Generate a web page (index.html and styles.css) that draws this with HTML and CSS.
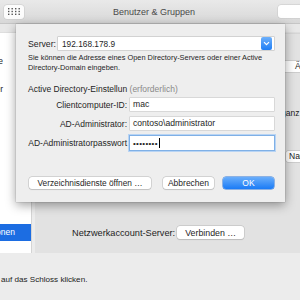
FILE: index.html
```html
<!DOCTYPE html>
<html lang="de">
<head>
<meta charset="utf-8">
<title>Benutzer &amp; Gruppen</title>
<link rel="stylesheet" href="styles.css">
</head>
<body>
<div class="window">
  <div class="titlebar">
    <div class="gridbtn">
      <svg width="12" height="7" viewBox="0 0 12 7">
        <g fill="#555">
          <rect x="0" y="0" width="1.4" height="1.4"/><rect x="3.5" y="0" width="1.4" height="1.4"/><rect x="7" y="0" width="1.4" height="1.4"/><rect x="10.5" y="0" width="1.4" height="1.4"/>
          <rect x="0" y="2.8" width="1.4" height="1.4"/><rect x="3.5" y="2.8" width="1.4" height="1.4"/><rect x="7" y="2.8" width="1.4" height="1.4"/><rect x="10.5" y="2.8" width="1.4" height="1.4"/>
          <rect x="0" y="5.6" width="1.4" height="1.4"/><rect x="3.5" y="5.6" width="1.4" height="1.4"/><rect x="7" y="5.6" width="1.4" height="1.4"/><rect x="10.5" y="5.6" width="1.4" height="1.4"/>
        </g>
      </svg>
    </div>
    <div class="title">Benutzer &amp; Gruppen</div>
    <div class="search"></div>
  </div>
  <div class="strip"></div>
  <div class="main">
    <div class="sidebar">
      <div class="side-item frag1">Gruppe</div>
      <div class="side-item frag2">Gastbenutzer</div>
      <div class="side-spacer"></div>
      <div class="side-item selected">Anmeldeoptionen</div>
    </div>
    <div class="panel">
      <div class="p-btn p-btn1">Ändern</div>
      <div class="p-text">ganz</div>
      <div class="p-btn p-btn2">Namen</div>
      <div class="p-spacer"></div>
      <div class="netrow">
        <span class="netlabel">Netzwerkaccount-Server:</span>
        <span class="btn verbinden">Verbinden …</span>
      </div>
    </div>
  </div>
  <div class="lockline">auf das Schloss klicken.</div>

  <div class="sheet">
    <div class="server-row">
      <span class="label">Server:</span>
      <div class="combo">
        <span class="combo-text">192.168.178.9</span>
        <span class="combo-btn">
          <svg width="7" height="5" viewBox="0 0 7 5"><path d="M1 1.2 L3.5 3.7 L6 1.2" fill="none" stroke="#fff" stroke-width="1.2"/></svg>
        </span>
      </div>
    </div>
    <p class="desc">Sie können die Adresse eines Open Directory-Servers oder einer Active Directory-Domain eingeben.</p>
    <div class="heading">Active Directory-Einstellun <span class="req">(erforderlich)</span></div>
    <div class="form">
      <label class="flabel">Clientcomputer-ID:</label>
      <div class="field">mac</div>
      <label class="flabel">AD-Administrator:</label>
      <div class="field">contoso\administrator</div>
      <label class="flabel">AD-Administratorpasswort</label>
      <div class="field focus"><span class="dots">••••••••</span><span class="caret"></span></div>
    </div>
    <div class="buttons">
      <span class="btn b-verz">Verzeichnisdienste öffnen …</span>
      <span class="btn b-abbr">Abbrechen</span>
      <span class="btn b-ok">OK</span>
    </div>
  </div>
</div>
</body>
</html>
```

FILE: styles.css
```css
html, body {
  margin: 0;
  padding: 0;
}
body {
  width: 300px;
  height: 300px;
  overflow: hidden;
  background: #ececec;
  font-family: "Liberation Sans", Arial, sans-serif;
  color: #222;
}
.window {
  position: relative;
  width: 300px;
  height: 300px;
  overflow: hidden;
}
.titlebar {
  height: 24px;
  box-sizing: border-box;
  display: flex;
  align-items: center;
  background: linear-gradient(#e9e9e9, #d8d8d8);
  border-bottom: 1px solid #c6c6c6;
}
.gridbtn {
  margin-left: 4px;
  width: 20px;
  height: 14px;
  background: #fcfcfc;
  border-radius: 3px;
  box-shadow: 0 0 0 0.5px #c8c8c8;
  display: flex;
  align-items: center;
  justify-content: center;
}
.title {
  margin-left: 89px;
  font-size: 9px;
  color: #4a4a4a;
  white-space: nowrap;
}
.search {
  margin-left: auto;
  margin-right: -10px;
  width: 32px;
  height: 13px;
  background: #fff;
  border-radius: 3px;
  box-shadow: 0 0 0 0.5px #c8c8c8;
}
.strip {
  height: 9px;
  background: #e8e8e8;
  border-bottom: 1px solid #dedede;
  box-sizing: border-box;
}
.main {
  display: flex;
  height: 220px;
}
.sidebar {
  width: 31px;
  background: #fff;
  border-right: 1px solid #d4d4d4;
  display: flex;
  flex-direction: column;
  overflow: hidden;
  font-size: 8.5px;
}
.side-item {
  display: flex;
  justify-content: flex-end;
  white-space: nowrap;
  overflow: hidden;
  height: 13px;
  line-height: 13px;
}
.frag1 {
  margin-top: 22px;
  padding-right: 28px;
}
.frag2 {
  margin-top: 15px;
  padding-right: 28px;
}
.side-spacer {
  flex: 1;
}
.selected {
  height: 17px;
  line-height: 17px;
  background: #1c6de2;
  color: #fff;
  padding-right: 16px;
  margin-bottom: 12px;
}
.panel {
  margin-left: 3px;
  flex: 1;
  background: #e2e2e2;
  border-top: 1px solid #d6d6d6;
  display: flex;
  flex-direction: column;
  font-size: 8.5px;
  overflow: hidden;
}
.p-btn {
  background: #fff;
  border-radius: 2px;
  box-shadow: 0 0 0 0.5px #b8b8b8;
  height: 11px;
  line-height: 11px;
  padding-left: 10px;
  white-space: nowrap;
  width: 40px;
}
.p-btn1 {
  margin-top: 27px;
  margin-left: 248px;
  padding-left: 12px;
}
.p-text {
  margin-top: 36px;
  margin-left: 246px;
  white-space: nowrap;
}
.p-btn2 {
  margin-top: 33px;
  margin-left: 251px;
  padding-left: 3px;
}
.p-spacer {
  flex: 1;
}
.netrow {
  display: flex;
  align-items: center;
  margin-left: 37px;
  margin-bottom: 14px;
  white-space: nowrap;
}
.netlabel {
  font-size: 9.2px;
  color: #1e1e1e;
}
.btn {
  display: inline-flex;
  align-items: center;
  justify-content: center;
  background: #fff;
  border-radius: 3px;
  box-shadow: 0 0 0 0.5px #b9b9b9, 0 0.5px 1px rgba(0,0,0,0.15);
  font-size: 8.5px;
  height: 12px;
  white-space: nowrap;
  color: #1e1e1e;
}
.verbinden {
  margin-left: 2px;
  width: 67px;
  height: 13px;
  font-size: 8.8px;
}
.lockline {
  margin-top: 22px;
  padding-left: 1px;
  font-size: 8.1px;
  color: #222;
  white-space: nowrap;
}

/* Sheet (overlay dialog) */
.sheet {
  position: absolute;
  left: 16px;
  top: 24px;
  width: 269px;
  height: 178px;
  box-sizing: border-box;
  background: #eeeeee;
  box-shadow: 0 3px 10px rgba(0,0,0,0.38), 0 0 1px rgba(0,0,0,0.4);
  padding: 13px 11px 0 12px;
  font-size: 8.5px;
  color: #1e1e1e;
}
.server-row {
  display: flex;
  align-items: center;
  height: 13px;
}
.label {
  font-size: 8.7px;
  width: 30px;
}
.combo {
  flex: 1;
  height: 13px;
  display: flex;
  align-items: center;
  background: #fff;
  box-shadow: 0 0 0 0.5px #b5b5b5;
}
.combo-text {
  flex: 1;
  padding-left: 4px;
  font-size: 8.3px;
}
.combo-btn {
  width: 11px;
  height: 13px;
  margin-right: 2px;
  border-radius: 2px;
  background: linear-gradient(#6db0fb, #1f7ef5);
  display: flex;
  align-items: center;
  justify-content: center;
}
.desc {
  margin: 3px 0 0 0;
  font-size: 7.4px;
  line-height: 10px;
  width: 250px;
}
.heading {
  margin-top: 10px;
  height: 12px;
  line-height: 12px;
  font-size: 8.5px;
  white-space: nowrap;
}
.req {
  color: #8a8a8a;
}
.form {
  margin-top: 3px;
  display: grid;
  grid-template-columns: 99px 1fr;
  column-gap: 3px;
  row-gap: 6px;
  align-items: center;
}
.flabel {
  text-align: right;
  font-size: 8.5px;
  white-space: nowrap;
}
.field {
  height: 13px;
  line-height: 13px;
  background: #fff;
  box-shadow: 0 0 0 0.5px #c2c2c2;
  padding-left: 3px;
  font-size: 8.6px;
  display: flex;
  align-items: center;
}
.field.focus {
  height: 14px;
  box-shadow: 0 0 0 1px #7fb0e6, 0 0 0 2px #b8d4f4;
}
.dots {
  font-size: 8px;
  letter-spacing: 0.3px;
}
.caret {
  width: 1px;
  height: 10px;
  background: #000;
  margin-left: 1px;
}
.buttons {
  margin-top: 26px;
  display: flex;
  align-items: center;
  height: 13px;
}
.buttons .btn {
  height: 12px;
}
.b-verz {
  margin-left: 1px;
  width: 122px;
  font-size: 8.3px;
}
.b-abbr {
  margin-left: 12px;
  width: 51px;
}
.b-ok {
  margin-left: 9px;
  width: 51px;
  background: linear-gradient(#6aaefb, #1a7bf6);
  color: #fff;
  box-shadow: 0 0 0 0.5px #2a74d8;
}
```
